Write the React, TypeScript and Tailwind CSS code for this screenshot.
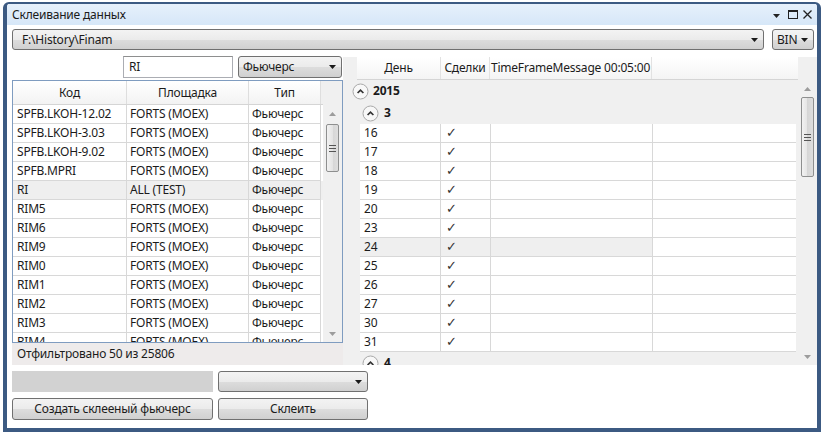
import React from 'react';

const leftRows: [string, string][] = [
  ['SPFB.LKOH-12.02', 'FORTS (MOEX)'],
  ['SPFB.LKOH-3.03', 'FORTS (MOEX)'],
  ['SPFB.LKOH-9.02', 'FORTS (MOEX)'],
  ['SPFB.MPRI', 'FORTS (MOEX)'],
  ['RI', 'ALL (TEST)'],
  ['RIM5', 'FORTS (MOEX)'],
  ['RIM6', 'FORTS (MOEX)'],
  ['RIM9', 'FORTS (MOEX)'],
  ['RIM0', 'FORTS (MOEX)'],
  ['RIM1', 'FORTS (MOEX)'],
  ['RIM2', 'FORTS (MOEX)'],
  ['RIM3', 'FORTS (MOEX)'],
  ['RIM4', 'FORTS (MOEX)'],
];

const days = ['16', '17', '18', '19', '20', '23', '24', '25', '26', '27', '30', '31'];

function Caret({ up = false, color = '#1a1a1a' }: { up?: boolean; color?: string }) {
  return (
    <svg width="7" height="4" viewBox="0 0 7 4" className="shrink-0">
      <path d={up ? 'M0 4H7L3.5 0Z' : 'M0 0H7L3.5 4Z'} fill={color} />
    </svg>
  );
}

function Combo({ text, className = '' }: { text: string; className?: string }) {
  return (
    <div
      className={`flex items-center rounded-[3px] border border-[#707070] bg-[linear-gradient(#f3f3f3,#ebebeb_50%,#dddddd_50%,#d0d0d0)] pr-[5px] ${className}`}
    >
      <span className="flex-1 truncate">{text}</span>
      <Caret />
    </div>
  );
}

function Button({ text, className = '' }: { text: string; className?: string }) {
  return (
    <div
      className={`flex items-center justify-center rounded-[3px] border border-[#707070] bg-[linear-gradient(#f3f3f3,#ebebeb_50%,#dddddd_50%,#d0d0d0)] ${className}`}
    >
      {text}
    </div>
  );
}

function VScroll({ gap, thumb }: { gap: number; thumb: number }) {
  return (
    <div className="flex h-full w-[19px] shrink-0 flex-col items-center">
      <div className="flex h-[17px] shrink-0 items-center justify-center">
        <Caret up color="#9c9c9c" />
      </div>
      <div style={{ height: gap }} className="shrink-0" />
      <div
        style={{ height: thumb }}
        className="flex w-[13px] shrink-0 flex-col items-center justify-center gap-[2px] rounded-[2px] border border-[#8e8f8f] bg-[linear-gradient(90deg,#f2f2f2,#e4e4e4_50%,#d6d6d6_50%,#dedede)]"
      >
        <div className="h-px w-[7px] bg-[#555]" />
        <div className="h-px w-[7px] bg-[#555]" />
        <div className="h-px w-[7px] bg-[#555]" />
      </div>
      <div className="flex-1" />
      <div className="flex h-[17px] shrink-0 items-center justify-center">
        <Caret color="#9c9c9c" />
      </div>
    </div>
  );
}

function Expander() {
  return (
    <svg width="17" height="17" viewBox="0 0 17 17" className="shrink-0">
      <circle cx="8.5" cy="8.5" r="7.5" fill="#f8f8f8" stroke="#a8a8a8" />
      <path d="M5.6 10l2.9-2.9 2.9 2.9" fill="none" stroke="#333" strokeWidth="1.7" />
    </svg>
  );
}

export default function App() {
  return (
    <div className="h-[435px] w-[825px] bg-white pl-[3px] pt-[2px] font-['Noto_Sans',sans-serif] text-[12px] tracking-[-0.2px] text-[#1b1b1b]">
      <div className="flex h-[430px] w-[818px] flex-col overflow-hidden rounded-t-[6px] border-x-4 border-b-4 border-t-2 border-[#3c5a82] bg-white">
        {/* title bar */}
        <div className="flex h-[21px] shrink-0 items-center bg-[linear-gradient(#e6f0fb,#d6e7f8)] pl-[5px] pr-[3px]">
          <span className="flex-1">Склеивание данных</span>
          <svg width="42" height="11" viewBox="0 0 42 11">
            <path d="M1 5h7l-3.5 4z" fill="#222" />
            <rect x="16.5" y="1.5" width="9" height="8" fill="none" stroke="#222" />
            <rect x="16" y="1" width="10" height="2" fill="#222" />
            <path d="M31.5 1.5l8 8M39.5 1.5l-8 8" stroke="#222" strokeWidth="1.3" />
          </svg>
        </div>

        {/* path row */}
        <div className="mt-[4px] flex h-[21px] shrink-0 gap-[8px] pl-[5px] pr-[3px]">
          <Combo text={'F:\\History\\Finam'} className="flex-1 pl-[9px]" />
          <Combo text="BIN" className="w-[42px] pl-[4px]" />
        </div>

        {/* main area */}
        <div className="mt-[6px] flex h-[309px] shrink-0 pl-[5px]">
          {/* left column */}
          <div className="flex w-[331px] shrink-0 flex-col">
            <div className="flex h-[22px] shrink-0 justify-end gap-[5px] pr-px">
              <div className="flex w-[110px] items-center border border-[#abadb3] border-t-[#8e8f8f] bg-white pl-[5px]">
                RI
              </div>
              <Combo text="Фьючерс" className="w-[104px] pl-[4px]" />
            </div>
            <div className="mt-[2px] flex h-[263px] shrink-0 overflow-hidden border border-[#7f9cc0] bg-white">
              <div className="flex w-[310px] shrink-0 flex-col">
                <div className="flex h-[24px] shrink-0 border-b border-[#d5d5d5] bg-[linear-gradient(#ffffff,#f3f3f3)]">
                  <div className="flex w-[114px] items-center justify-center border-r border-[#dedede]">Код</div>
                  <div className="flex w-[122px] items-center justify-center border-r border-[#dedede]">Площадка</div>
                  <div className="flex w-[72px] items-center justify-center border-r border-[#dedede]">Тип</div>
                  <div className="flex-1 bg-[#f0f0f0]" />
                </div>
                {leftRows.map(([code, place]) => (
                  <div
                    key={code}
                    className={`flex h-[19px] shrink-0 ${code === 'RI' ? 'bg-[#efefef]' : 'bg-white'}`}
                  >
                    <div className="flex w-[114px] items-center border-b border-r border-[#d8d8d8] pl-[4px]">{code}</div>
                    <div className="flex w-[122px] items-center border-b border-r border-[#d8d8d8] pl-[3px]">{place}</div>
                    <div className="flex w-[72px] items-center border-b border-r border-[#d8d8d8] pl-[3px]">Фьючерс</div>
                  </div>
                ))}
              </div>
              <div className="flex w-[19px] shrink-0 flex-col bg-[#f0f0f0]">
                <div className="h-[24px] shrink-0" />
                <div className="min-h-0 flex-1">
                  <VScroll gap={2} thumb={48} />
                </div>
              </div>
            </div>
            <div className="flex h-[22px] shrink-0 items-center bg-[#eeebeb] pl-[5px]">Отфильтровано 50 из 25806</div>
          </div>

          {/* right grid */}
          <div className="mt-px flex h-[308px] flex-1 overflow-hidden bg-[#f0f0f0]">
            <div className="flex min-w-0 flex-1 flex-col">
              <div className="flex h-[23px] shrink-0 pl-[14px]">
                <div className="flex flex-1 border-b border-[#d5d5d5] bg-[linear-gradient(#ffffff,#f4f4f4)]">
                  <div className="flex w-[84px] items-center justify-center border-r border-[#e2e2e2]">День</div>
                  <div className="flex w-[49px] items-center justify-center border-r border-[#e2e2e2]">Сделки</div>
                  <div className="flex w-[162px] items-center justify-center border-r border-[#e2e2e2]">TimeFrameMessage 00:05:00</div>
                  <div className="flex-1" />
                </div>
              </div>
              <div className="flex h-[22px] shrink-0 items-center gap-[4px] pl-[9px] font-bold">
                <Expander />
                <span>2015</span>
              </div>
              <div className="flex h-[22px] shrink-0 items-center gap-[5px] pl-[19px] font-bold">
                <Expander />
                <span>3</span>
              </div>
              {days.map((d) => (
                <div key={d} className="ml-[17px] flex h-[19px] w-[436px] shrink-0 bg-white">
                  <div className={`flex w-[81px] items-center border-b border-r border-[#d8d8d8] pl-[4px] ${d === '24' ? 'bg-[#efefef]' : ''}`}>{d}</div>
                  <div className={`flex w-[50px] items-center border-b border-r border-[#d8d8d8] pl-[5px] font-['DejaVu_Sans',sans-serif] text-[13px] text-[#333] ${d === '24' ? 'bg-[#efefef]' : ''}`}>✓</div>
                  <div className={`w-[162px] border-b border-r border-[#d8d8d8] ${d === '24' ? 'bg-[#efefef]' : ''}`} />
                  <div className="flex-1 border-b border-[#d8d8d8]" />
                </div>
              ))}
              <div className="flex h-[22px] shrink-0 items-center gap-[5px] pl-[19px] font-bold">
                <Expander />
                <span>4</span>
              </div>
            </div>
            <div className="flex w-[19px] shrink-0 flex-col">
              <div className="h-[23px] shrink-0" />
              <div className="min-h-0 flex-1">
                <VScroll gap={0} thumb={80} />
              </div>
            </div>
          </div>
        </div>

        {/* bottom controls */}
        <div className="mt-[6px] flex h-[21px] shrink-0 gap-[5px] pl-[5px]">
          <div className="w-[201px] bg-[#d2d2d2]" />
          <Combo text="" className="w-[150px]" />
        </div>
        <div className="mt-[6px] flex h-[22px] shrink-0 gap-[5px] pl-[5px]">
          <Button text="Создать склееный фьючерс" className="w-[201px]" />
          <Button text="Склеить" className="w-[150px]" />
        </div>
      </div>
    </div>
  );
}
